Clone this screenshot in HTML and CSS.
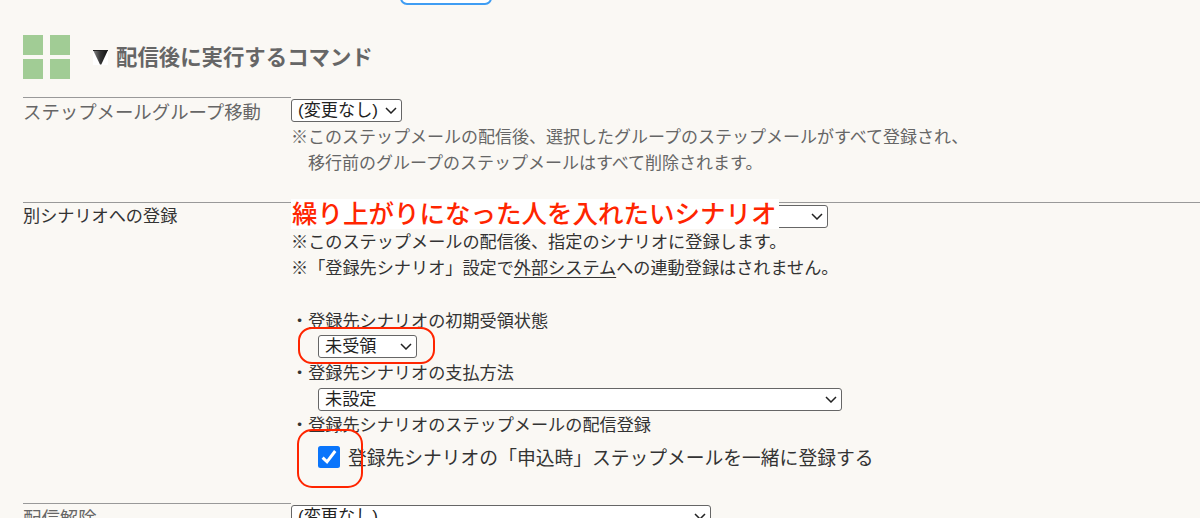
FILE: index.html
```
<!DOCTYPE html>
<html lang="ja">
<head>
<meta charset="UTF-8" />
<meta name="viewport" content="width=device-width,initial-scale=1" />
<title>配信後に実行するコマンド</title>
<link rel="stylesheet" href="styles.css">
</head>

<body>
<div class="topBtn"></div>

<h2 class="heading">
  <span class="tiles"><i></i><i></i><i></i><i></i></span>
  <svg class="triangle" width="15" height="15" viewBox="0 0 15 15">
    <defs>
      <linearGradient id="tri" x1="0" y1="0" x2="1" y2="0">
        <stop offset="0" stop-color="#888"/>
        <stop offset=".5" stop-color="#333"/>
        <stop offset="1" stop-color="#111"/>
      </linearGradient>
    </defs>
    <rect width="15" height="15" fill="#fff"/>
    <path d="M0 0H15L8.3 14.5H7Z" fill="url(#tri)"/>
    <path d="M0 .5H15" stroke="#222"/>
  </svg>
  <span class="title">配信後に実行するコマンド</span>
</h2>

<div class="form">
  <!-- グループ移動 -->
  <div class="row row-group">
    <div class="label label-large">ステップメールグループ移動</div>
    <div class="field">
      <div class="line"><span class="select w-group"><select><option>(変更なし)</option></select><svg viewBox="0 0 12 7"><path d="M1 1L6 6L11 1"/></svg></span></div>
      <div class="line note">※このステップメールの配信後、選択したグループのステップメールがすべて登録され、</div>
      <div class="line note">　移行前のグループのステップメールはすべて削除されます。</div>
    </div>
  </div>

  <!-- 別シナリオ -->
  <div class="row row-scenario">
    <div class="label">別シナリオへの登録</div>
    <div class="field">
      <div class="line scenario">
        <span class="select w-scenario"><select><option></option></select><svg viewBox="0 0 12 7"><path d="M1 1L6 6L11 1"/></svg></span>
        <span class="memo">繰り上がりになった人を入れたいシナリオ</span>
      </div>
      <div class="line note">※このステップメールの配信後、指定のシナリオに登録します。</div>
      <div class="line note">※「登録先シナリオ」設定で<u>外部システム</u>への連動登録はされません。</div>
      <div class="line"></div>
      <div class="line note">・登録先シナリオの初期受領状態</div>
      <div class="line indent">
        <span class="select w-status"><select><option>未受領</option></select><svg viewBox="0 0 12 7"><path d="M1 1L6 6L11 1"/></svg></span>
        <span class="mark mark-status"></span>
      </div>
      <div class="line note">・登録先シナリオの支払方法</div>
      <div class="line indent"><span class="select w-pay"><select><option>未設定</option></select><svg viewBox="0 0 12 7"><path d="M1 1L6 6L11 1"/></svg></span></div>
      <div class="line note">・登録先シナリオのステップメールの配信登録</div>
      <label class="line indent check">
        <svg class="checkbox" width="22" height="22" viewBox="0 0 22 22">
          <rect width="22" height="22" rx="2.5" fill="#0a75fb"/>
          <path d="M4.6 11.6L9 15.8L17.2 5" fill="none" stroke="#fff" stroke-width="3"/>
        </svg>
        <span class="check-text">登録先シナリオの「申込時」ステップメールを一緒に登録する</span>
        <span class="mark mark-check"></span>
      </label>
    </div>
  </div>

  <!-- 配信解除 -->
  <div class="row row-cancel">
    <div class="label label-large">配信解除</div>
    <div class="field">
      <div class="line"><span class="select w-cancel"><select><option>(変更なし)</option></select><svg viewBox="0 0 12 7"><path d="M1 1L6 6L11 1"/></svg></span></div>
    </div>
  </div>
</div>
</body>
</html>
```
FILE: styles.css
```
/* ---------- reset ---------- */
*
{
  box-sizing:border-box;
  margin:0;
  padding:0;
}
body
{
  height:518px;
  overflow:hidden;
  background:#faf8f4;
  color:#333;
  font-family:"Liberation Sans","Noto Sans CJK JP",sans-serif;
  font-size:17.15px;
}

/* ===== 上部ボタン ===== */
.topBtn
{
  width:92px;
  height:25px;
  margin:-20px 0 0 400px;
  border:2px solid #3f9df3;
  border-radius:7px;
  background:#fff;
}

/* ===== 見出し ===== */
.heading
{
  display:flex;
  align-items:center;
  height:44px;
  margin:30px 0 18px 23px;
  color:#666;
  font-size:21.4px;
  line-height:44px;
}
.tiles
{
  display:grid;
  grid-template-columns:20px 20px;
  grid-template-rows:20px 20px;
  gap:4px 7px;
}
.tiles i{background:#a1cc95;}
.triangle{margin:0 8px 0 23px;}
.title{padding-top:1px;}

/* ===== 設定フォーム ===== */
.form{margin-left:23px;}
.row
{
  display:grid;
  grid-template-columns:268px 1fr;
}
.label{line-height:26px;}
.label-large
{
  padding-top:2px;
  font-size:18.4px;
}
.line
{
  display:flex;
  align-items:center;
  height:26.15px;
  white-space:nowrap;
}
.note{padding-bottom:3px;}
.indent{padding-left:27px;position:relative;}

.row-group
{
  height:105px;
  color:#666;
}
.row-group .field{padding-top:1px;}
.row-group .note{font-size:17px;}
.row-scenario
{
  height:301px;
  border-top:1px solid #999;
}
.row-group .label,
.row-cancel .label
{
  border-top:1px solid #999;
}
.row-cancel{color:#666;}

/* ===== セレクト ===== */
.select
{
  display:inline-grid;
  align-items:center;
  height:23px;
}
.select select,
.select svg
{
  grid-area:1/1;
}
.select select
{
  appearance:none;
  width:100%;
  height:23px;
  padding:0 6px 1px;
  border:1px solid #666;
  border-radius:3px;
  background:#fff;
  color:#222;
  font:inherit;
  font-size:17.15px;
  line-height:20px;
}
.select svg
{
  justify-self:end;
  width:12px;
  height:7px;
  margin-right:5px;
  fill:none;
  stroke:#222;
  stroke-width:1.5;
  pointer-events:none;
}
.row-group .line:first-child{padding-bottom:2px;}
.w-group{width:111px;}
.w-scenario{width:537px;}
.w-status{width:99px;}
.w-pay{width:524px;}
.w-cancel{width:420px;}

/* ===== 赤い注記 ===== */
.scenario{position:relative;}
.memo
{
  position:absolute;
  top:-4px;
  left:0;
  width:488px;
  height:30px;
  padding-left:1px;
  background:#fff;
  color:#ff2500;
  font-size:25.5px;
  font-weight:500;
  line-height:30px;
}
.mark
{
  position:absolute;
  border:2px solid #ff2500;
}
.mark-status
{
  top:-7px;
  left:7px;
  width:137px;
  height:37px;
  border-radius:14px;
}
.mark-check
{
  top:-9px;
  left:6px;
  width:66px;
  height:59px;
  border-radius:15px;
}
u
{
  text-decoration-thickness:1px;
  text-underline-offset:3px;
}

/* ===== チェックボックス ===== */
.check
{
  height:38px;
  font-size:18.77px;
}
.checkbox{margin-right:8px;}
.check-text{padding-bottom:2px;}
```
